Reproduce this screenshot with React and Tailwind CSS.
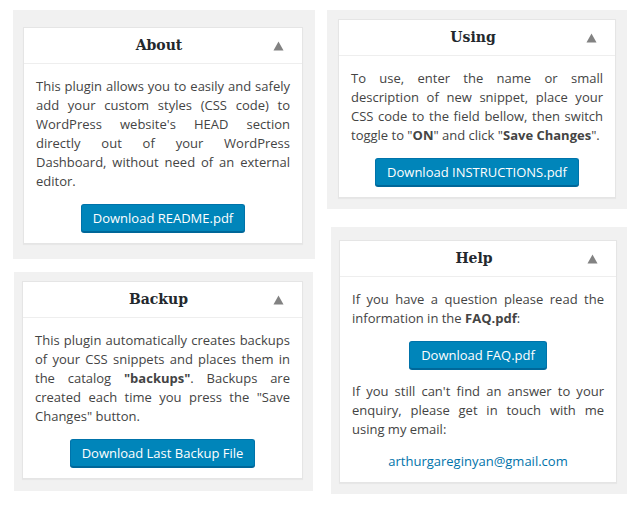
import React from "react";

// Small gray collapse arrow shown on the right of each box header
const ToggleArrow = () => (
  <svg width="11" height="10" viewBox="0 0 11 10" className="shrink-0">
    <path d="M5.5 0.5 L10.5 9.5 L0.5 9.5 Z" fill="#828282" />
  </svg>
);

const WpButton = ({ children }) => (
  <div className="flex justify-center">
    <span className="inline-flex items-center h-[28px] px-[11px] rounded-[3px] bg-[#0085ba] border border-[#0073aa] border-b-[#006799] shadow-[0_1px_0_#006799] text-white text-[13px] leading-[26px]">
      {children}
    </span>
  </div>
);

const Postbox = ({ title, wrap, children }) => (
  <div className={`bg-[#f1f1f1] ${wrap}`}>
    <div className="bg-white border border-[#e5e5e5] shadow-[0_1px_1px_rgba(0,0,0,0.04)]">
      <div className="flex items-center h-[36px] border-b border-[#eeeeee] pl-[21px] pr-[18px]">
        <span
          className="flex-1 text-center text-[14px] font-bold text-[#23282d]"
          style={{ fontFamily: '"DejaVu Serif", Georgia, serif' }}
        >
          {title}
        </span>
        <ToggleArrow />
      </div>
      <div className="px-[12px] pt-[13px] pb-[11px] flex flex-col gap-[13px] text-[13px] leading-[19px] text-[#444]">
        {children}
      </div>
    </div>
  </div>
);

export default function App() {
  return (
    <div
      className="w-[640px] h-[507px] bg-white flex items-start pl-[13px] pt-[10px]"
      style={{ fontFamily: '"Open Sans", "Noto Sans", sans-serif' }}
    >
      {/* Left column */}
      <div className="w-[302px] flex flex-col gap-[13px]">
        <Postbox title="About" wrap="pt-[17px] pb-[15px] pl-[10px] pr-[12px]">
          <p className="text-justify">
            This plugin allows you to easily and safely add your custom styles (CSS code) to
            WordPress website's HEAD section directly out of your WordPress Dashboard, without
            need of an external editor.
          </p>
          <WpButton>Download README.pdf</WpButton>
        </Postbox>

        <Postbox title="Backup" wrap="ml-[1px] w-[299px] pt-[9px] pb-[12px] pl-[8px] pr-[10px]">
          <p className="text-justify">
            This plugin automatically creates backups of your CSS snippets and places them in the
            catalog <b>"backups"</b>. Backups are created each time you press the "Save Changes"
            button.
          </p>
          <WpButton>Download Last Backup File</WpButton>
        </Postbox>
      </div>

      {/* Right column */}
      <div className="w-[300px] ml-[12px] flex flex-col gap-[18px]">
        <Postbox title="Using" wrap="pt-[9px] pb-[11px] pl-[11px] pr-[11px]">
          <p className="text-justify">
            To use, enter the name or small description of new snippet, place your CSS code to the
            field bellow, then switch toggle to "<b>ON</b>" and click "<b>Save Changes</b>".
          </p>
          <WpButton>Download INSTRUCTIONS.pdf</WpButton>
        </Postbox>

        <Postbox title="Help" wrap="ml-[4px] w-[296px] pt-[13px] pb-[11px] pl-[8px] pr-[10px]">
          <p className="text-justify">
            If you have a question please read the information in the <b>FAQ.pdf</b>:
          </p>
          <WpButton>Download FAQ.pdf</WpButton>
          <p className="text-justify">
            If you still can't find an answer to your enquiry, please get in touch with me using
            my email:
          </p>
          <p className="text-center text-[#0073aa]">arthurgareginyan@gmail.com</p>
        </Postbox>
      </div>
    </div>
  );
}
